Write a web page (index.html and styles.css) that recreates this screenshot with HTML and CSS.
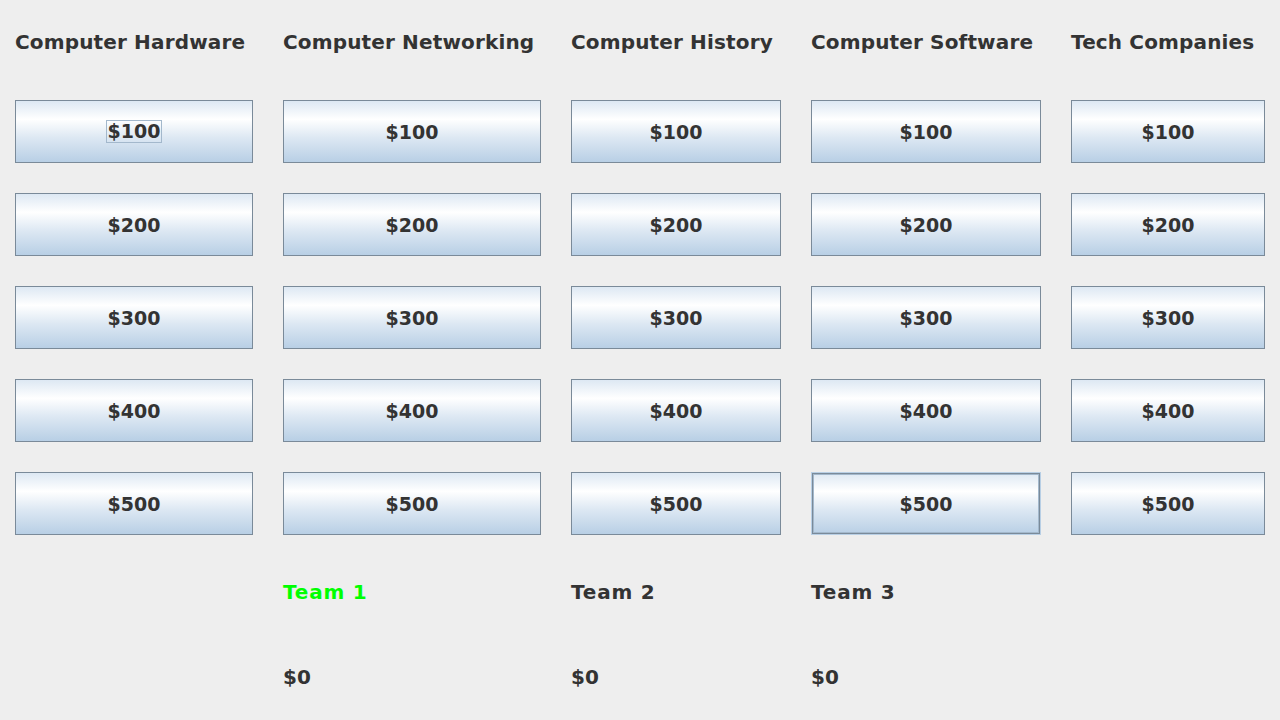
FILE: index.html
```html
<!DOCTYPE html>
<html>
<head>
<meta charset="utf-8">
<link rel="stylesheet" href="styles.css">
</head>
<body>
<div class="board">
  <div class="cat">Computer Hardware</div>
  <div class="cat">Computer Networking</div>
  <div class="cat">Computer History</div>
  <div class="cat">Computer Software</div>
  <div class="cat">Tech Companies</div>

  <div class="btn"><span class="focus">$100</span></div>
  <div class="btn">$100</div>
  <div class="btn">$100</div>
  <div class="btn">$100</div>
  <div class="btn">$100</div>

  <div class="btn">$200</div>
  <div class="btn">$200</div>
  <div class="btn">$200</div>
  <div class="btn">$200</div>
  <div class="btn">$200</div>

  <div class="btn">$300</div>
  <div class="btn">$300</div>
  <div class="btn">$300</div>
  <div class="btn">$300</div>
  <div class="btn">$300</div>

  <div class="btn">$400</div>
  <div class="btn">$400</div>
  <div class="btn">$400</div>
  <div class="btn">$400</div>
  <div class="btn">$400</div>

  <div class="btn">$500</div>
  <div class="btn">$500</div>
  <div class="btn">$500</div>
  <div class="btn hover">$500</div>
  <div class="btn">$500</div>

  <div class="empty"></div>
  <div class="team active">Team 1</div>
  <div class="team">Team 2</div>
  <div class="team">Team 3</div>
  <div class="empty"></div>

  <div class="empty"></div>
  <div class="score">$0</div>
  <div class="score">$0</div>
  <div class="score">$0</div>
  <div class="empty"></div>
</div>
</body>
</html>
```
FILE: styles.css
```css
html, body {
  margin: 0;
  padding: 0;
  background: #eeeeee;
  height: 720px;
  overflow: hidden;
}
body {
  font-family: "DejaVu Sans", "Liberation Sans", sans-serif;
  font-weight: bold;
  font-size: 20px;
  color: #333333;
}
.board {
  display: grid;
  grid-template-columns: 238px 258px 210px 230px 194px;
  grid-template-rows: 100px repeat(5, 93px) 54px 116px;
  column-gap: 30px;
  padding-left: 15px;
}
.cat {
  height: 84px;
  line-height: 84px;
  white-space: nowrap;
  letter-spacing: 0.15px;
}
.btn {
  box-sizing: border-box;
  height: 63px;
  border: 1px solid #7a8a99;
  background: linear-gradient(to bottom, #dde8f3 0%, #ffffff 30%, #dde8f3 60%, #b8cfe5 100%);
  display: flex;
  align-items: center;
  justify-content: center;
  font-size: 19px;
}
.btn.hover {
  border-color: #b8cfe5;
  box-shadow: inset 0 0 0 1px #7a8a99, inset 0 0 0 2px #a3b8cc;
}
.focus {
  outline: 1px solid #a3b8cc;
  padding: 0 1px;
  line-height: 21px;
}
.team, .score {
  align-self: center;
  white-space: nowrap;
}
.team {
  letter-spacing: 0.8px;
}
.team.active {
  color: #00ff00;
}
```
